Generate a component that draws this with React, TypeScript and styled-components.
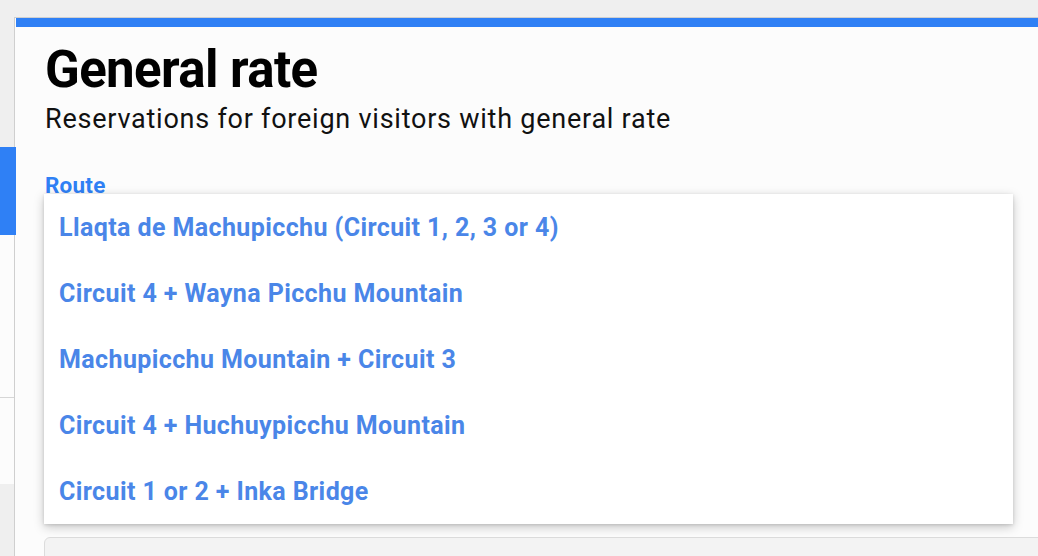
import styled, { createGlobalStyle } from "styled-components";

const GlobalStyle = createGlobalStyle`
  html, body {
    margin: 0;
    padding: 0;
    background: #efefef;
    overflow: hidden;
  }
  body {
    font-family: Roboto, "Liberation Sans", Arial, sans-serif;
  }
`;

const Page = styled.div`
  display: flex;
  flex-direction: row;
  width: 1038px;
  height: 556px;
  overflow: hidden;
`;

const Sidebar = styled.div`
  display: flex;
  flex-direction: column;
  width: 14px;
  flex: none;
  padding-top: 147px;
  position: relative;
  z-index: 2;
`;

const SideItem = styled.div<{ $active?: boolean; $height: number; $divider?: boolean }>`
  flex: none;
  height: ${(p) => p.$height}px;
  width: ${(p) => (p.$active ? "16px" : "14px")};
  background: ${(p) => (p.$active ? "#2f80f5" : "#fcfcfc")};
  border-bottom: ${(p) => (p.$divider ? "1px solid #d6d6d6" : "none")};
`;

const Panel = styled.div`
  flex: 1;
  margin-top: 17px;
  border-top: 1px solid #cfcfcf;
  border-left: 1px solid #cfcfcf;
  background: #fcfcfc;
  display: flex;
  flex-direction: column;
  min-width: 0;
  overflow: hidden;
`;

const BlueBar = styled.div`
  flex: none;
  height: 9px;
  margin-left: 1px;
  background: #2f80f5;
`;

const Content = styled.div`
  flex: none;
  display: flex;
  flex-direction: column;
  padding-left: 30px;
`;

const Title = styled.h1`
  margin: 13px 0 0;
  font-size: 51px;
  line-height: 60px;
  font-weight: 700;
  color: #000;
  letter-spacing: -0.6px;
`;

const Subtitle = styled.p`
  margin: 4px 0 0;
  font-size: 27px;
  line-height: 30px;
  font-weight: 400;
  color: #111;
  letter-spacing: 0.76px;
`;

const FieldLabel = styled.label`
  margin-top: 41px;
  font-size: 22.5px;
  line-height: 20px;
  height: 20px;
  font-weight: 700;
  color: #2f80f5;
  letter-spacing: 0.2px;
`;

const Menu = styled.ul`
  position: relative;
  z-index: 1;
  list-style: none;
  margin: -1px 0 0 -1px;
  padding: 0;
  width: 969px;
  background: #fff;
  box-shadow: 0 3px 10px rgba(0, 0, 0, 0.22), 0 1px 3px rgba(0, 0, 0, 0.12);
`;

const MenuItem = styled.li`
  height: 66px;
  display: flex;
  align-items: center;
  padding: 0 15px;
  font-size: 25px;
  font-weight: 700;
  color: #4a86e8;
  letter-spacing: 0.4px;
  cursor: pointer;
`;

const NextInput = styled.div`
  margin: 13px 0 0 -1px;
  width: 1100px;
  height: 60px;
  border: 1px solid #dcdcdc;
  border-radius: 6px;
  background: #f3f3f3;
`;

const routes = [
  "Llaqta de Machupicchu (Circuit 1, 2, 3 or 4)",
  "Circuit 4 + Wayna Picchu Mountain",
  "Machupicchu Mountain + Circuit 3",
  "Circuit 4 + Huchuypicchu Mountain",
  "Circuit 1 or 2 + Inka Bridge",
];

export default function App() {
  return (
    <>
      <GlobalStyle />
      <Page>
        <Sidebar>
          <SideItem $active $height={88} />
          <SideItem $height={162} $divider />
          <SideItem $height={86} />
        </Sidebar>
        <Panel>
          <BlueBar />
          <Content>
            <Title>General rate</Title>
            <Subtitle>Reservations for foreign visitors with general rate</Subtitle>
            <FieldLabel>Route</FieldLabel>
            <Menu>
              {routes.map((r) => (
                <MenuItem key={r}>{r}</MenuItem>
              ))}
            </Menu>
            <NextInput />
          </Content>
        </Panel>
      </Page>
    </>
  );
}
